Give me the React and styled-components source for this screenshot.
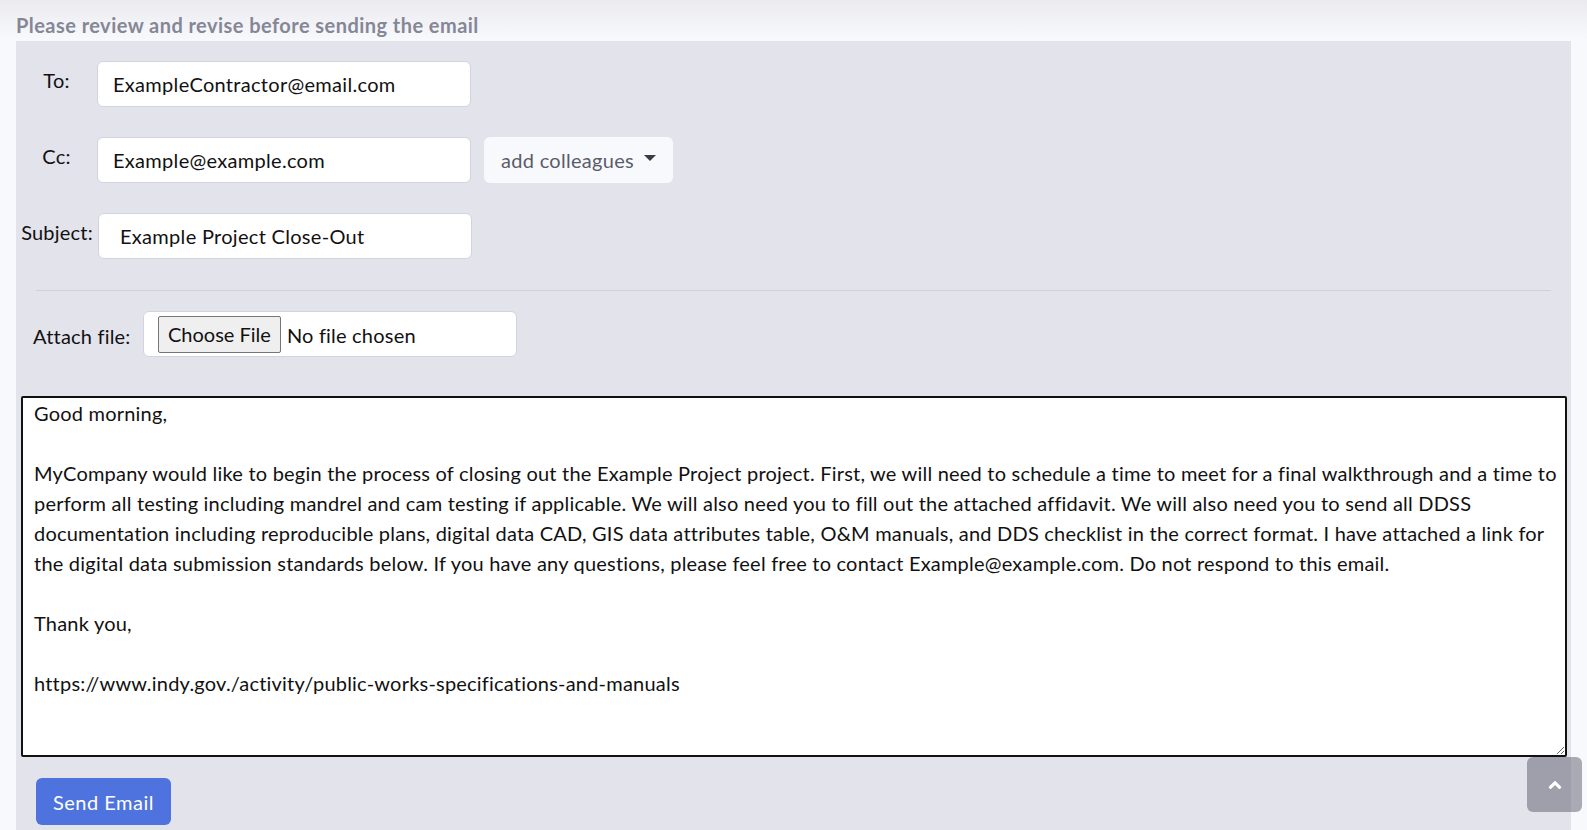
import React from 'react'
import styled, { createGlobalStyle } from 'styled-components'
import { FaAngleUp } from 'react-icons/fa'

const GlobalStyle = createGlobalStyle`
  html, body {
    margin: 0;
    padding: 0;
  }
  body {
    background: linear-gradient(#ebebef 0, #f8f9fc 40px) no-repeat, #f8f9fc;
    font-family: Lato, "Noto Sans", sans-serif;
    letter-spacing: 0.2px;
    color: #111;
    overflow: hidden;
  }
`

const Page = styled.div`
  padding: 0 16px;
  height: 830px;
`

const CardHeader = styled.div`
  height: 41px;
  box-sizing: border-box;
  padding-top: 8px;
  display: flex;
  align-items: center;
  font-size: 20px;
  font-weight: 700;
  letter-spacing: 0.45px;
  color: #858796;
`

const Panel = styled.div`
  background: #e3e3ec;
  padding: 20px 0 0;
  min-height: 800px;
`

const Row = styled.div`
  display: flex;
  align-items: center;
  margin-bottom: ${p => p.$mb || 0}px;
  padding-left: ${p => p.$pl || 0}px;
`

const Label = styled.label`
  width: ${p => p.$w || 81}px;
  flex-shrink: 0;
  text-align: ${p => p.$align || 'center'};
  font-size: 20px;
  margin-top: ${p => p.$top ?? -9}px;
  white-space: nowrap;
`

const Input = styled.input`
  box-sizing: border-box;
  width: 374px;
  height: 46px;
  padding: 0 ${p => p.$px || 15}px;
  border: 1px solid #d1d3e2;
  border-radius: 6px;
  background: #fff;
  font: inherit;
  font-size: 20px;
  letter-spacing: 0.3px;
  color: #111;
  outline: none;
`

const DropButton = styled.button`
  height: 46px;
  margin-left: 13px;
  padding: 0 17px;
  border: none;
  border-radius: 6px;
  background: #f8f9fc;
  color: #5a5c69;
  font: inherit;
  font-size: 20px;
  letter-spacing: 0.3px;
  display: flex;
  align-items: center;
  gap: 10px;
  &::after {
    content: '';
    border-top: 6px solid #3a3b45;
    border-left: 6px solid transparent;
    border-right: 6px solid transparent;
    margin-top: -4px;
  }
`

const Divider = styled.hr`
  border: none;
  border-top: 1px solid #cfd0d9;
  margin: 31px 20px 20px;
`

const FileBox = styled.div`
  box-sizing: border-box;
  width: 374px;
  height: 46px;
  margin-left: 13px;
  padding: 0 14px;
  display: flex;
  align-items: center;
  background: #fff;
  border: 1px solid #d1d3e2;
  border-radius: 6px;
`

const FileInput = styled.input`
  font: inherit;
  font-size: 20px;
  letter-spacing: 0.2px;
  color: #111;
  &::file-selector-button {
    font: inherit;
    font-size: 20px;
    height: 37px;
    padding: 0 9px;
    margin-right: 6px;
    background: #efefef;
    color: #111;
    border: 1px solid #767676;
    border-radius: 2px;
  }
`

const Body = styled.textarea`
  display: block;
  box-sizing: border-box;
  width: calc(100% - 9px);
  height: 361px;
  margin: 39px 0 0 5px;
  padding: 0 2px 0 11px;
  border: 2px solid #111;
  border-radius: 2px;
  background: #fff;
  font: inherit;
  font-size: 20px;
  line-height: 30px;
  letter-spacing: 0.21px;
  color: #111;
  outline: none;
  resize: vertical;
`

const SendButton = styled.button`
  margin: 21px 0 0 20px;
  height: 47px;
  padding: 0 17px;
  border: none;
  border-radius: 6px;
  background: #4e73df;
  color: #fff;
  font: inherit;
  font-size: 20px;
  letter-spacing: 0.5px;
`

const ScrollTop = styled.a`
  position: fixed;
  right: 5px;
  bottom: 18px;
  width: 55px;
  height: 55px;
  border-radius: 6px;
  background: rgba(90, 92, 105, 0.5);
  color: #fff;
  display: flex;
  align-items: center;
  justify-content: center;
  font-size: 20px;
`

const bodyText = `Good morning,

MyCompany would like to begin the process of closing out the Example Project project. First, we will need to schedule a time to meet for a final walkthrough and a time to perform all testing including mandrel and cam testing if applicable. We will also need you to fill out the attached affidavit. We will also need you to send all DDSS documentation including reproducible plans, digital data CAD, GIS data attributes table, O&M manuals, and DDS checklist in the correct format. I have attached a link for the digital data submission standards below. If you have any questions, please feel free to contact Example@example.com. Do not respond to this email.

Thank you,

https://www.indy.gov./activity/public-works-specifications-and-manuals`

const App = () => (
  <Page>
    <GlobalStyle />
    <CardHeader>Please review and revise before sending the email</CardHeader>
    <Panel>
      <Row $mb={30}>
        <Label>To:</Label>
        <Input defaultValue="ExampleContractor@email.com" />
      </Row>
      <Row $mb={30}>
        <Label>Cc:</Label>
        <Input defaultValue="Example@example.com" />
        <DropButton>add colleagues</DropButton>
      </Row>
      <Row>
        <Label $w={82}>Subject:</Label>
        <Input defaultValue="Example Project Close-Out" $px={21} />
      </Row>
      <Divider />
      <Row $pl={17}>
        <Label $w={97} $align="left" $top={3}>Attach file:</Label>
        <FileBox>
          <FileInput type="file" />
        </FileBox>
      </Row>
      <Body defaultValue={bodyText} spellCheck={false} />
      <SendButton>Send Email</SendButton>
    </Panel>
    <ScrollTop href="#top">
      <FaAngleUp />
    </ScrollTop>
  </Page>
)

export default App
